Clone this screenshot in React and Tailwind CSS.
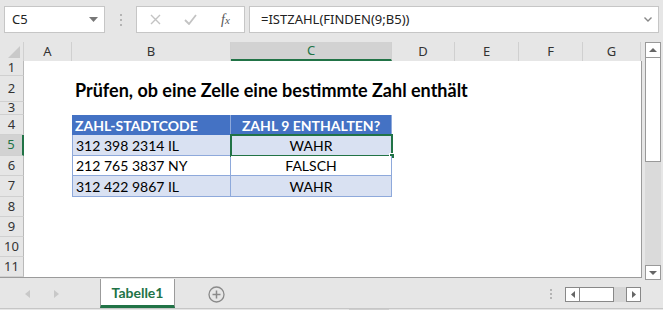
import React from 'react';

const cols = [
  { k: 'A', w: 48 },
  { k: 'B', w: 159 },
  { k: 'C', w: 161 },
  { k: 'D', w: 63 },
  { k: 'E', w: 64 },
  { k: 'F', w: 64 },
  { k: 'G', w: 58 },
];

const rows = [
  { n: 1, h: 'h-[15px]' },
  { n: 2, h: 'h-[26px]' },
  { n: 3, h: 'h-[13px]' },
  { n: 4, h: 'h-[20px]' },
  { n: 5, h: 'h-[21px]' },
  { n: 6, h: 'h-[20px]' },
  { n: 7, h: 'h-[21px]' },
  { n: 8, h: 'h-[20px]' },
  { n: 9, h: 'h-[20px]' },
  { n: 10, h: 'h-[20px]' },
  { n: 11, h: 'h-[20px]' },
];

const data = {
  5: ['312 398 2314 IL', 'WAHR'],
  6: ['212 765 3837 NY', 'FALSCH'],
  7: ['312 422 9867 IL', 'WAHR'],
};

const cellFont = { fontFamily: 'Lato, "Open Sans", sans-serif' };

const Body = ({ n }) => {
  if (n === 2) {
    return (
      <div className="flex items-center h-full">
        <div className="w-[48px]" />
        <div className="w-[159px] pl-[3px] pt-[3px] text-[18px] font-bold text-black whitespace-nowrap overflow-visible" style={cellFont}>
          Prüfen, ob eine Zelle eine bestimmte Zahl enthält
        </div>
      </div>
    );
  }
  if (n === 4) {
    return (
      <div className="flex h-full">
        <div className="w-[48px]" />
        <div className="w-[159px] bg-[#4472c4] text-white font-bold text-[14px] pl-[3px] flex items-center border-r border-[#8ea9db]" style={cellFont}>
          ZAHL-STADTCODE
        </div>
        <div className="w-[161px] bg-[#4472c4] text-white font-bold text-[14px] flex items-center justify-center border-r border-[#8ea9db]" style={cellFont}>
          ZAHL 9 ENTHALTEN?
        </div>
      </div>
    );
  }
  if (data[n]) {
    const bg = n === 6 ? 'bg-white' : 'bg-[#d9e1f2]';
    return (
      <div className="flex h-full">
        <div className="w-[48px]" />
        <div className={`w-[159px] ${bg} text-[14px] text-black pl-[3px] flex items-center border-l border-b border-r border-[#8ea9db]`} style={cellFont}>
          {data[n][0]}
        </div>
        <div className={`relative w-[161px] ${bg} text-[14px] text-black flex items-center justify-center border-b border-r border-[#8ea9db]`} style={cellFont}>
          {data[n][1]}
          {n === 5 && (
            <div className="absolute -left-[1px] -top-[1px] -right-[2px] -bottom-[2px] border-2 border-[#217346]">
              <div className="absolute -right-[4px] -bottom-[4px] w-[6px] h-[6px] bg-[#217346] border border-white" />
            </div>
          )}
        </div>
      </div>
    );
  }
  return null;
};

export default function App() {
  const ui = { fontFamily: '"Noto Sans", "Open Sans", sans-serif' };
  return (
    <div className="w-[663px] h-[310px] bg-[#e6e6e6] overflow-hidden relative select-none" style={ui}>
      {/* formula bar */}
      <div className="h-[42px] flex items-start pt-[6px]">
        <div className="ml-[4px] w-[101px] h-[27px] bg-white border border-[#c6c6c6] flex items-center justify-between pl-[7px] pr-[6px]">
          <span className="text-[13px] text-[#222]">C5</span>
          <svg width="9" height="5" viewBox="0 0 9 5"><path d="M0 0h9L4.5 5z" fill="#777" /></svg>
        </div>
        <div className="w-[31px] h-[27px] flex flex-col items-center justify-center gap-[3px]">
          <span className="w-[2px] h-[2px] bg-[#b4b4b4]" />
          <span className="w-[2px] h-[2px] bg-[#b4b4b4]" />
          <span className="w-[2px] h-[2px] bg-[#b4b4b4]" />
        </div>
        <div className="w-[109px] h-[27px] bg-white border border-[#c6c6c6] flex items-center">
          <svg className="ml-[13px]" width="11" height="11" viewBox="0 0 11 11"><path d="M1 1l9 9M10 1l-9 9" stroke="#c3c3c3" strokeWidth="1.4" /></svg>
          <svg className="ml-[23px]" width="13" height="11" viewBox="0 0 13 11"><path d="M1 6l4 4 7-9" stroke="#c3c3c3" strokeWidth="1.8" fill="none" /></svg>
          <span className="ml-[24px] text-[14px] italic text-[#555]" style={{ fontFamily: '"Liberation Serif", serif' }}>f<span className="text-[11px]">x</span></span>
        </div>
        <div className="ml-[4px] w-[410px] h-[27px] bg-white border border-[#c6c6c6] flex items-center justify-between pl-[11px] pr-[6px]">
          <span className="text-[13px] text-[#222]">=ISTZAHL(FINDEN(9;B5))</span>
          <svg width="8" height="5" viewBox="0 0 8 5"><path d="M0.5 0.5l3.5 3.5 3.5-3.5" stroke="#888" strokeWidth="1.4" fill="none" /></svg>
        </div>
      </div>

      <div className="flex">
        {/* sheet */}
        <div className="w-[642px]">
          {/* column headers */}
          <div className="flex h-[19px] bg-[#e6e6e6]">
            <div className="w-[24px] h-full relative border-r border-[#d0d0d0]">
              <svg className="absolute right-[3px] bottom-[3px]" width="12" height="12" viewBox="0 0 12 12"><path d="M12 0V12H0z" fill="#c9c9c9" /></svg>
            </div>
            {cols.map((c) => (
              <div
                key={c.k}
                style={{ width: c.w }}
                className={`h-full flex items-center justify-center text-[13px] border-r border-[#d0d0d0] ${c.k === 'C' ? 'bg-[#d2d2d2] text-[#217346] border-b-2 border-b-[#217346]' : 'text-[#333]'}`}
              >
                {c.k}
              </div>
            ))}
          </div>
          {/* rows */}
          <div className="bg-white border-r border-b border-[#9b9b9b]">
            {rows.map((r) => (
              <div key={r.n} className={`flex ${r.h}`}>
                <div className={`w-[24px] shrink-0 flex items-center justify-center text-[13px] border-b border-[#d0d0d0] ${r.n === 5 ? 'bg-[#d2d2d2] text-[#217346] border-r-2 border-r-[#217346]' : 'bg-[#e6e6e6] text-[#333] border-r border-r-[#b9b9b9]'}`}>
                  {r.n}
                </div>
                <div className="flex-1">
                  <Body n={r.n} />
                </div>
              </div>
            ))}
          </div>
        </div>
        {/* vertical scrollbar */}
        <div className="ml-[3px] w-[16px] flex flex-col bg-[#dadada] h-[238px]">
          <div className="h-[16px] bg-white border border-[#999] flex items-center justify-center">
            <svg width="8" height="4" viewBox="0 0 8 4"><path d="M0 4L4 0l4 4z" fill="#666" /></svg>
          </div>
          <div className="h-[104px] bg-white border-x border-b border-[#999]" />
          <div className="flex-1" />
          <div className="h-[15px] bg-white border border-[#999] flex items-center justify-center">
            <svg width="8" height="4" viewBox="0 0 8 4"><path d="M0 0h8L4 4z" fill="#666" /></svg>
          </div>
        </div>
      </div>

      {/* sheet tabs */}
      <div className="flex h-[28px] items-stretch">
        <div className="w-[100px] flex items-center">
          <svg className="ml-[25px]" width="5" height="8" viewBox="0 0 5 8"><path d="M5 0v8L0 4z" fill="#c8c8c8" /></svg>
          <svg className="ml-[24px]" width="5" height="8" viewBox="0 0 5 8"><path d="M0 0v8l5-4z" fill="#c8c8c8" /></svg>
        </div>
        <div className="w-[75px] bg-white border-l border-r border-[#9b9b9b] border-b-[3px] border-b-[#217346] -mt-[1px] flex items-center justify-center text-[14px] font-bold text-[#217346]" style={cellFont}>
          Tabelle1
        </div>
        <div className="ml-[33px] flex items-center">
          <svg width="17" height="17" viewBox="0 0 17 17">
            <circle cx="8.5" cy="8.5" r="7.5" fill="none" stroke="#8a8a8a" strokeWidth="1.3" />
            <path d="M8.5 4.5v8M4.5 8.5h8" stroke="#8a8a8a" strokeWidth="1.5" />
          </svg>
        </div>
        <div className="ml-auto mr-[22px] flex items-center">
          <div className="flex flex-col gap-[2px] mr-[13px]">
            <span className="w-[2px] h-[2px] bg-[#b4b4b4]" />
            <span className="w-[2px] h-[2px] bg-[#b4b4b4]" />
            <span className="w-[2px] h-[2px] bg-[#b4b4b4]" />
          </div>
          <div className="flex h-[15px]">
            <div className="w-[15px] bg-white border border-[#888] flex items-center justify-center">
              <svg width="4" height="7" viewBox="0 0 4 7"><path d="M4 0v7L0 3.5z" fill="#666" /></svg>
            </div>
            <div className="w-[34px] bg-white border-y border-r border-[#888]" />
            <div className="w-[12px] bg-[#d6d6d6]" />
            <div className="w-[15px] bg-white border border-[#888] flex items-center justify-center">
              <svg width="4" height="7" viewBox="0 0 4 7"><path d="M0 0v7l4-3.5z" fill="#666" /></svg>
            </div>
          </div>
        </div>
      </div>
      <div className="h-[3px] border-t border-[#c6c6c6] flex">
        <div className="ml-[349px] w-[40px] bg-[#cfcfcf]" />
      </div>
    </div>
  );
}
